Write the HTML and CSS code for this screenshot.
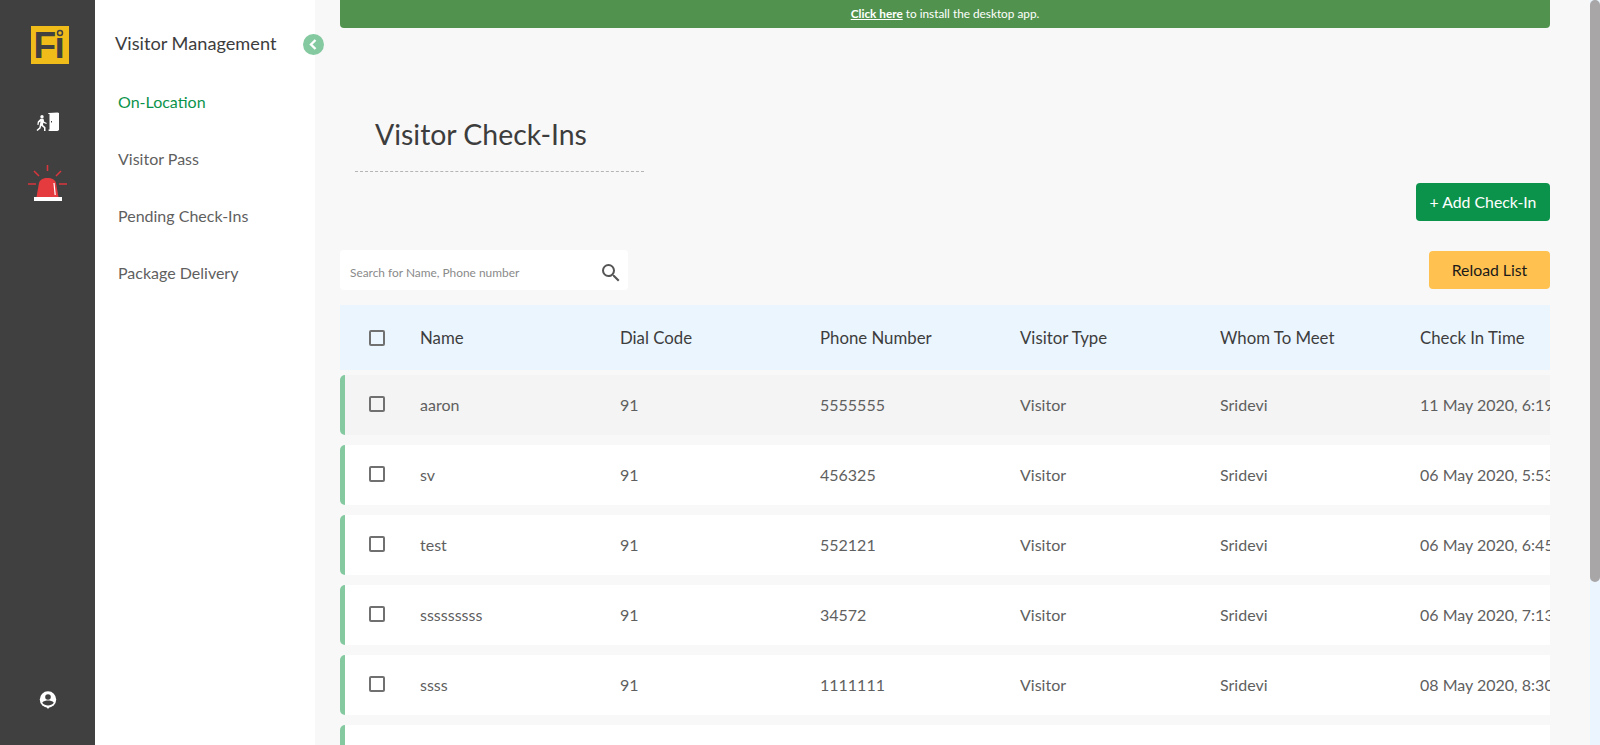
FILE: index.html
```html
<!DOCTYPE html>
<html lang="en">
<head>
<meta charset="utf-8">
<title>Visitor Check-Ins</title>
<link rel="stylesheet" href="styles.css">
</head>
<body>
<div class="app">
  <aside class="rail">
    <svg class="logo" viewBox="0 0 38 38" width="38" height="38" aria-label="Fi logo">
      <rect width="38" height="38" fill="#f0bc1a"/>
      <text x="2.500" y="32" class="logo-text">Fı</text>
      <circle cx="29" cy="7" r="2.500" fill="none" stroke="#404040" stroke-width="1.500"/>
    </svg>
    <svg class="icon-exit" viewBox="0 0 24 20" width="24" height="20">
      <path fill="#fff" d="M12 1.500 12.600 1 21.500 0.500 23 1 23 18 21.500 19 13 19 12.500 18.500 12.500 17.500 13.500 17.500 13.500 1.900 12.500 2Z"/>
      <rect x="15" y="9" width="1" height="1.500" fill="#404040"/>
      <circle cx="6" cy="4.800" r="1.700" fill="#fff"/>
      <path fill="#fff" d="M4.500 6.800 7.500 6.800 8.200 9.800 10.800 11 10.300 12 7.300 10.800 7 13 9.500 15.200 9.500 19 8 19 8 16 5.300 13.800 4.500 16.500 1.500 19 0.500 18 3.300 15.500 4.500 9.500 3 10.500 2.500 13 1.300 12.800 1.800 9.500Z"/>
    </svg>
    <svg class="icon-alarm" viewBox="0 0 39 36" width="39" height="36">
      <g stroke="#d9363e" stroke-width="1.500" fill="none">
        <path d="M19.500 0V6M6 6l5 5M33 6l-5 5M0 19H8M31 19h8"/>
      </g>
      <path fill="#e53b3f" d="M8.500 32 11 18C12 14.500 15 13 19.500 13S27 14.500 28 18L30.500 32Z"/>
      <path stroke="#fff" stroke-width="1.200" fill="none" d="M26 18 27.200 30"/>
      <rect x="6" y="32" width="28" height="4" fill="#fff"/>
    </svg>
    <svg class="icon-user" viewBox="0 0 18 18" width="18" height="18">
      <circle cx="9" cy="8.500" r="8.200" fill="#fff"/>
      <path fill="#fff" d="M7.500 16 10.500 16 9 18Z"/>
      <circle cx="9" cy="6" r="2.800" fill="#404040"/>
      <path fill="#404040" d="M3.200 11.800C4.500 9.800 7 9.500 9 9.500S13.500 9.800 14.800 11.800C13.500 13.500 11 14.500 9 14.500S4.500 13.500 3.200 11.800Z"/>
    </svg>
  </aside>

  <nav class="subnav">
    <h2 class="subnav-title">Visitor Management</h2>
    <a class="subnav-link is-active">On-Location</a>
    <a class="subnav-link">Visitor Pass</a>
    <a class="subnav-link">Pending Check-Ins</a>
    <a class="subnav-link">Package Delivery</a>
    <span class="collapse">
      <svg viewBox="0 0 21 21" width="21" height="21">
        <path d="M12.500 6 8 10.500 12.500 15" fill="none" stroke="#fff" stroke-width="2.400"/>
      </svg>
    </span>
  </nav>

  <main class="main">
    <div class="banner"><a class="banner-link">Click here</a> to install the desktop app.</div>
    <header class="heading">
      <h1>Visitor Check-Ins</h1>
    </header>
    <div class="actions-top">
      <button class="btn btn-green">+ Add Check-In</button>
    </div>
    <div class="toolbar">
      <div class="search">
        <span class="search-text">Search for Name, Phone number</span>
        <svg viewBox="0 0 24 24" width="24" height="24">
          <path fill="#555" d="M15.500 14h-.79l-.28-.27A6.470 6.470 0 0 0 16 9.500 6.500 6.500 0 1 0 9.500 16c1.610 0 3.090-.59 4.230-1.570l.27.28v.79l5 4.990L20.490 19l-4.990-5zm-6 0C7.010 14 5 11.990 5 9.500S7.010 5 9.500 5 14 7.010 14 9.500 11.990 14 9.500 14z"/>
        </svg>
      </div>
      <button class="btn btn-amber">Reload List</button>
    </div>

    <div class="table">
      <div class="row row-head">
        <span class="cell-check"><input class="check" type="checkbox"></span>
        <span>Name</span><span>Dial Code</span><span>Phone Number</span><span>Visitor Type</span><span>Whom To Meet</span><span>Check In Time</span>
      </div>
      <div class="row row-body is-hover">
        <span class="cell-check"><input class="check" type="checkbox"></span>
        <span>aaron</span><span>91</span><span>5555555</span><span>Visitor</span><span>Sridevi</span><span>11 May 2020, 6:19 PM</span>
      </div>
      <div class="row row-body">
        <span class="cell-check"><input class="check" type="checkbox"></span>
        <span>sv</span><span>91</span><span>456325</span><span>Visitor</span><span>Sridevi</span><span>06 May 2020, 5:53 PM</span>
      </div>
      <div class="row row-body">
        <span class="cell-check"><input class="check" type="checkbox"></span>
        <span>test</span><span>91</span><span>552121</span><span>Visitor</span><span>Sridevi</span><span>06 May 2020, 6:45 PM</span>
      </div>
      <div class="row row-body">
        <span class="cell-check"><input class="check" type="checkbox"></span>
        <span>sssssssss</span><span>91</span><span>34572</span><span>Visitor</span><span>Sridevi</span><span>06 May 2020, 7:13 PM</span>
      </div>
      <div class="row row-body">
        <span class="cell-check"><input class="check" type="checkbox"></span>
        <span>ssss</span><span>91</span><span>1111111</span><span>Visitor</span><span>Sridevi</span><span>08 May 2020, 8:30 PM</span>
      </div>
      <div class="row row-body"></div>
    </div>
  </main>
  <div class="scrollbar"><div class="scrollbar-thumb"></div></div>
</div>
</body>
</html>
```

FILE: styles.css
```css
* { box-sizing: border-box; }
html, body { margin: 0; height: 100%; overflow: hidden; }
body { font-family: Lato, "Liberation Sans", sans-serif; color: #5f5f5f; background: #f8f8f8; }

.app { display: flex; height: 745px; }

.rail {
  width: 95px; flex: none; background: #404040;
  display: flex; flex-direction: column; align-items: center;
  padding: 26px 0 0;
}
.logo { display: block; margin: 0 0 48px 5px; overflow: visible; }
.logo-text { font-family: "Liberation Sans", sans-serif; font-weight: 700; font-size: 37px; letter-spacing: -1.500px; fill: #404040; }
.icon-exit { display: block; margin-bottom: 33px; }
.icon-alarm { display: block; }
.icon-user { display: block; margin-top: auto; margin-bottom: 36px; }

.subnav {
  position: relative; width: 220px; flex: none; background: #fff;
  display: flex; flex-direction: column; padding: 0 0 0 23px;
}
.subnav-title { margin: 31px 0 35px -3px; font-size: 18.200px; line-height: 24px; font-weight: 400; color: #3d3d3d; }
.subnav-link { height: 57px; font-size: 16px; line-height: 24px; color: #5f5f5f; }
.subnav-link.is-active { color: #0b934b; }
.collapse {
  position: absolute; top: 34px; right: -9px; width: 21px; height: 21px;
  border-radius: 50%; background: #84c9a0; display: block;
}
.collapse svg { display: block; }

.main {
  flex: 1; min-width: 0; height: 745px; overflow: hidden;
  padding: 0 40px 0 25px; background: #f8f8f8;
}
.scrollbar { width: 10px; flex: none; height: 745px; background: #ebf5fd; }
.scrollbar-thumb { height: 582px; background: #a8a6a6; border-radius: 5px; }

.banner {
  height: 28px; background: #51934e; color: #fff; border-radius: 0 0 4px 4px;
  text-align: center; font-size: 11.800px; line-height: 28px;
}
.banner-link { font-weight: 700; text-decoration: underline; }

.heading { margin: 87px 0 0 15px; width: 289px; height: 57px; border-bottom: 1px dashed #b5b5b5; padding-left: 20px; }
.heading h1 { margin: 0; font-size: 28.400px; line-height: 38px; font-weight: 400; color: #3d3d3d; }

.actions-top { display: flex; justify-content: flex-end; margin-top: 11px; }
.toolbar { display: flex; justify-content: space-between; align-items: center; margin-top: 29px; }

.btn {
  border: 0; height: 38px; border-radius: 4px; font-family: inherit; font-size: 15.800px; padding: 0 0 2px;
}
.btn-green { width: 134px; background: #0b934b; color: #fff; }
.btn-amber { width: 121px; background: #ffc250; color: #1a1a1a; }

.search {
  width: 288px; height: 40px; background: #fff; border-radius: 4px;
  display: flex; align-items: center; justify-content: space-between;
  padding: 6px 5px 0 10px;
}
.search-text { font-size: 11.900px; color: #8a8a8a; padding-bottom: 2px; }

.table { margin-top: 15px; display: flex; flex-direction: column; gap: 10px; }
.row {
  display: grid; grid-template-columns: 80px repeat(6, 200px);
  align-items: center; overflow: hidden; white-space: nowrap;
  width: 100%;
}
.row-head {
  height: 65px; margin-bottom: -5px; background: #ebf5fd; color: #3d3d3d; font-size: 16.800px;
}
.row-body {
  height: 60px; background: #fff; font-size: 16px; color: #5f5f5f; padding-bottom: 2px;
  border-left: 5px solid #84c9a0; border-radius: 5px 0 0 5px;
  grid-template-columns: 75px repeat(6, 200px);
}
.row-body.is-hover { background: #f4f4f4; }
.cell-check { display: flex; padding-left: 29px; }
.row-body .cell-check { padding-left: 24px; }
.check {
  appearance: none; margin: 0; width: 16px; height: 16px; background: transparent;
  border: 2px solid #707070; border-radius: 2px; display: block;
}
```
